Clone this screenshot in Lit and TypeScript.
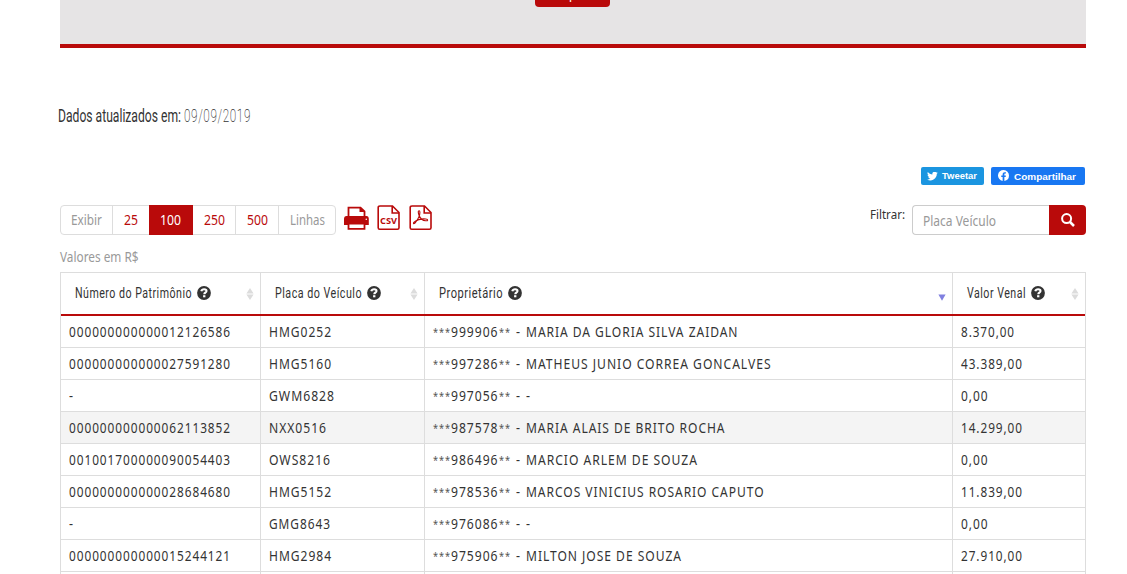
import { LitElement, html, svg, css } from "lit";
import { customElement, property } from "lit/decorators.js";

/* One line of text set to a given width; inherited letter spacing is scaled with it. */
@customElement("fit-text")
class FitText extends LitElement {
  @property() text = "";
  @property({ type: Number }) width = 0;
  @property({ type: Number }) height = 20;
  @property({ type: Number }) baseline = 15;
  static styles = css`
    :host { display: block; flex: none; }
    svg { display: block; overflow: visible; }
    text { fill: currentColor; white-space: pre; }
  `;
  render() {
    return html`<svg width=${this.width} height=${this.height}>
      <text x="0" y=${this.baseline} textLength=${this.width} lengthAdjust="spacingAndGlyphs">${this.text}</text>
    </svg>`;
  }
}

const fit = (text: string, width: number, height = 20, baseline = 15) =>
  html`<fit-text .text=${text} .width=${width} .height=${height} .baseline=${baseline}></fit-text>`;

const columns: [string, number, boolean][] = [
  ["Número do Patrimônio", 117, false],
  ["Placa do Veículo", 87, false],
  ["Proprietário", 64, true],
  ["Valor Venal", 59, false],
];

type Row = { asset: string; plate: [string, number]; id: string; owner: [string, number]; value: [string, number] };
const rows: Row[] = [
  { asset: "000000000000012126586", plate: ["HMG0252", 63], id: "999906", owner: ["MARIA DA GLORIA SILVA ZAIDAN", 212.5], value: ["8.370,00", 54] },
  { asset: "000000000000027591280", plate: ["HMG5160", 63], id: "997286", owner: ["MATHEUS JUNIO CORREA GONCALVES", 245.5], value: ["43.389,00", 62] },
  { asset: "-", plate: ["GWM6828", 66], id: "997056", owner: ["-", 5], value: ["0,00", 27.5] },
  { asset: "000000000000062113852", plate: ["NXX0516", 58], id: "987578", owner: ["MARIA ALAIS DE BRITO ROCHA", 199.5], value: ["14.299,00", 62] },
  { asset: "001001700000090054403", plate: ["OWS8216", 62], id: "986496", owner: ["MARCIO ARLEM DE SOUZA", 172], value: ["0,00", 27.5] },
  { asset: "000000000000028684680", plate: ["HMG5152", 63], id: "978536", owner: ["MARCOS VINICIUS ROSARIO CAPUTO", 238.5], value: ["11.839,00", 62] },
  { asset: "-", plate: ["GMG8643", 62], id: "976086", owner: ["-", 5], value: ["0,00", 27.5] },
  { asset: "000000000000015244121", plate: ["HMG2984", 63], id: "975906", owner: ["MILTON JOSE DE SOUZA", 156], value: ["27.910,00", 62] },
];

const help = html`<svg class="help" width="14" height="14" viewBox="0 0 14 14">
  <circle cx="7" cy="7" r="6.9" fill="#333" />
  <path d="M4.3 5.2C4.7 3.7 5.7 3.2 7.1 3.2c1.5 0 2.4.7 2.4 1.8 0 1.7-2.2 1.7-2.2 3.2" fill="none" stroke="#fff" stroke-width="2.1" />
  <rect x="6.1" y="9.2" width="2.3" height="2.1" fill="#fff" />
</svg>`;

const both = html`<svg width="8" height="12" viewBox="0 0 8 12" fill="#dcdcdc"><path d="M4 0 7.6 5.4H.4zM4 12 .4 6.6h7.2z" /></svg>`;
const down = html`<svg class="down" width="8" height="7" viewBox="0 0 8 7"><path d="M.4.4h7.2L4 6.8z" fill="#8080e0" /></svg>`;

const page = svg`<path d="M3 1H15.5L22 7.500V22.800q0 1.500-1.500 1.500H2.700q-1.500 0-1.500-1.500V2.500Q1.200 1 3 1z" /><path d="M15.200 1V8H22" />`;

@customElement("app-root")
class AppRoot extends LitElement {
  static styles = css`
    :host {
      display: block; box-sizing: border-box; width: 1127px; height: 574px; overflow: hidden;
      padding: 0 41px 0 60px; background: #fff; color: #333;
      font: 14px "Noto Sans", sans-serif;
    }
    * { box-sizing: border-box; }
    .search { height: 48px; padding-right: 1px; background: #e6e4e5; border-bottom: 4px solid #b90a0a; display: flex; justify-content: center; align-items: flex-start; }
    .submit { width: 75px; height: 34px; margin-top: -27px; border-radius: 4px; background: #b90a0a; color: #fff; display: flex; justify-content: center; padding-top: 9.5px; }
    .updated { display: flex; gap: 3px; margin: 56px 0 0 -2px; height: 20px; font: 19px Roboto, sans-serif; }
    .updated .label { -webkit-text-stroke: .35px #333; }
    .updated .date { font-weight: 200; letter-spacing: 1px; }
    .social { display: flex; justify-content: flex-end; gap: 7px; margin-top: 43px; height: 18px; padding-right: 1px; }
    .share { display: flex; align-items: center; border-radius: 2px; color: #fff; font: bold 9.5px "Liberation Sans", sans-serif; }
    .tw { width: 63px; background: #1b95e0; padding-left: 6px; gap: 4px; }
    .fb { width: 94px; background: #1877f2; padding-left: 7px; gap: 5px; }
    .fb svg { margin-top: -2px; }
    .tools { display: flex; margin-top: 20px; height: 30px; }
    .pages { display: flex; width: 276px; border: 1px solid #ddd; border-radius: 4px; color: #999; font-size: 13.5px; }
    .pages div { display: flex; align-items: center; justify-content: center; border-right: 1px solid #ddd; }
    .pages div:last-child { border-right: 0; }
    .pages .n { color: #b90a0a; }
    .pages .on { background: #b90a0a; color: #fff; margin: -1px 0; padding-right: 1px; border: 0; }
    .w0 { width: 52px; } .w1 { width: 36px; } .w2 { width: 44px; } .w3 { width: 43px; } .w5 { flex: 1; }
    .pages .w1 { border-right: 0; }
    .exports { display: flex; gap: 8px; margin-left: 8px; }
    .exports svg { display: block; }
    .csv { font: bold 9px "Open Sans", sans-serif; }
    .filter { display: flex; margin-left: auto; }
    .flabel { font-size: 12px; color: #333; margin-right: 7px; -webkit-text-stroke: .3px #333; }
    .field { width: 137px; border: 1px solid #ccc; border-right: 0; border-radius: 4px 0 0 4px; padding: 5px 0 0 10px; color: #999; font-size: 13.5px; }
    .go { width: 37px; background: #b90a0a; border-radius: 0 4px 4px 0; display: flex; align-items: center; justify-content: center; }
    .note { height: 37px; padding-top: 12px; color: #999; font-size: 13.5px; }
    .table { border: 1px solid #ddd; border-bottom: 0; }
    .row { display: grid; grid-template-columns: 199px 163px 527px 132px; column-gap: 1px; height: 32px; border-bottom: 1px solid #ddd; }
    .row > div { display: flex; align-items: center; padding-left: 8px; }
    .row > div + div { box-shadow: -1px 0 #ddd; }
    .row.shade { background: #f4f4f4; }
    .row.body { font-size: 13.8px; font-weight: 370; letter-spacing: 1.1px; }
    .stars { font-size: 10.5px; color: #555; }
    .dash { margin: 0 5px; }
    .row.head { height: 43px; border-bottom: 2px solid #b90a0a; font: 15.5px Roboto, sans-serif; letter-spacing: .7px; }
    .row.head > div { padding: 0 6px 2px 14px; gap: 4.5px; }
    .sort { margin-left: auto; display: flex; padding-top: 2px; }
    .help { display: block; }
    .down { margin-top: 7px; }
  `;

  render() {
    return html`
      <div class="search"><div class="submit">${fit("Pesquisar", 59, 20, 15)}</div></div>
      <div class="updated">
        <span class="label">${fit("Dados atualizados em:", 123, 20, 18)}</span>
        <span class="date">${fit("09/09/2019", 67, 20, 18)}</span>
      </div>
      <div class="social">
        <div class="share tw">
          <svg width="11" height="9" viewBox="0 3 24 20" fill="#fff"><path d="M24 4.600a10 10 0 0 1-2.800.8 5 5 0 0 0 2.100-2.700 10 10 0 0 1-3.100 1.200 4.900 4.900 0 0 0-8.400 4.500C7.700 8.200 4.100 6.200 1.700 3.200a4.900 4.900 0 0 0 1.500 6.500 5 5 0 0 1-2.200-.6 4.900 4.900 0 0 0 3.900 4.900 5 5 0 0 1-2.200.1 4.900 4.900 0 0 0 4.600 3.400A9.900 9.900 0 0 1 0 19.500a14 14 0 0 0 7.500 2.200c9.100 0 14.300-7.700 14-14.600A10 10 0 0 0 24 4.600z" /></svg>
          ${fit("Tweetar", 35, 18, 12)}
        </div>
        <div class="share fb">
          <svg width="11" height="11" viewBox="0 0 24 24" fill="#fff"><path d="M24 12a12 12 0 1 0-13.900 11.900v-8.400H7.100V12h3V9.400c0-3 1.800-4.700 4.500-4.700 1.300 0 2.700.2 2.700.2v3h-1.500c-1.500 0-1.900.9-1.900 1.900V12h3.300l-.5 3.500h-2.800v8.400A12 12 0 0 0 24 12z" /></svg>
          ${fit("Compartilhar", 62, 18, 13)}
        </div>
      </div>
      <div class="tools">
        <div class="pages">
          <div class="w0">${fit("Exibir", 31, 20, 15)}</div>
          <div class="n w1">${fit("25", 14, 20, 15)}</div>
          <div class="on w2">${fit("100", 21, 20, 15)}</div>
          <div class="n w3">${fit("250", 21, 20, 15)}</div>
          <div class="n w3">${fit("500", 21, 20, 15)}</div>
          <div class="w5">${fit("Linhas", 35, 20, 15)}</div>
        </div>
        <div class="exports">
          <svg width="25" height="27" viewBox="0 0 25 27">
            <path d="M4.500 12V2.700h12L20.500 6.500V12" fill="#fff" stroke="#b90a0a" stroke-width="1.800" />
            <path d="M15.500 2v5h5z" fill="#b90a0a" />
            <path d="M2.500 11h20Q24.800 11 24.800 14v6H0v-6q0-3 2.500-3z" fill="#b90a0a" />
            <path d="M4.500 18.500h16v5.300h-16z" fill="#fff" stroke="#b90a0a" stroke-width="1.800" />
            <circle cx="22.300" cy="14.300" r=".8" fill="#fff" />
          </svg>
          <svg width="23" height="26" viewBox="0 0 23 26" fill="none" stroke="#b90a0a" stroke-width="1.600">
            ${page}<text class="csv" x="3" y="18.500" textLength="17" lengthAdjust="spacingAndGlyphs" fill="#b90a0a" stroke="none">CSV</text>
          </svg>
          <svg width="25" height="26" viewBox="-1 0 25 26" fill="none" stroke="#b90a0a" stroke-width="1.600">
            ${page}<path stroke-width="1.100" d="M10.300 5.800c-1.400-.3-1.200 2.200-.3 4.400 1.200 2.900 3.500 5.300 6.600 5.600 2.600.2 2.800-1.500.2-1.800-4-.4-8.800.9-11.400 2.900-1.900 1.500-.6 2.700.9.800 2-2.500 4.600-7.500 4.600-10.200 0-1.100-.2-1.600-.6-1.700z" />
          </svg>
        </div>
        <div class="filter">
          <div class="flabel">${fit("Filtrar:", 35, 20, 14)}</div>
          <div class="field">${fit("Placa Veículo", 73, 20, 15)}</div>
          <div class="go"><svg width="14" height="14" viewBox="0 0 14 14" fill="none" stroke="#fff"><circle cx="5.600" cy="5.600" r="4.500" stroke-width="2" /><path d="M9 9l4 4" stroke-width="2.500" /></svg></div>
        </div>
      </div>
      <div class="note">${fit("Valores em R$", 78.5, 20, 15)}</div>
      <div class="table">
        <div class="row head">
          ${columns.map(([t, w, active]) => html`<div>${fit(t, w, 20, 15)}${help}<span class="sort">${active ? down : both}</span></div>`)}
        </div>
        ${rows.map((r, i) => html`<div class="row body ${i === 3 ? "shade" : ""}">
          <div>${fit(r.asset, r.asset === "-" ? 5 : 162)}</div>
          <div>${fit(...r.plate)}</div>
          <div>
            <span class="stars">${fit("***", 18, 20, 13.5)}</span>${fit(r.id, 47.5)}<span class="stars">${fit("**", 12, 20, 13.5)}</span>
            <span class="dash">${fit("-", 5)}</span>${fit(...r.owner)}
          </div>
          <div>${fit(...r.value)}</div>
        </div>`)}
        <div class="row body"><div></div><div></div><div></div><div></div></div>
      </div>
    `;
  }
}
